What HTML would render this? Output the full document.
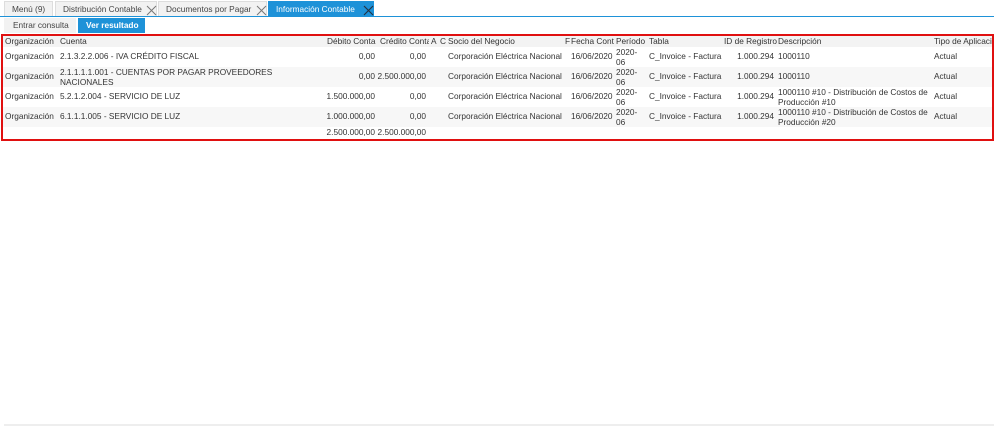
<!DOCTYPE html>
<html><head><meta charset="utf-8"><style>
*{margin:0;padding:0;box-sizing:border-box}
body{width:994px;height:426px;background:#fff;font-family:"Liberation Sans",sans-serif;font-size:8.3px;color:#333;position:relative;overflow:hidden}
.a{position:absolute;white-space:nowrap;line-height:9.5px}
.tab{position:absolute;top:1px;height:15px;background:#f2f2f2;border:1px solid #ddd;border-bottom:none;color:#444;padding:2px 0 0 7px;font-size:8.3px;line-height:10px}
.x{position:absolute;top:3px}
.r{text-align:right}
</style></head><body>
<div class="tab" style="left:4px;width:49px">Menú (9)</div>
<div class="tab" style="left:55px;width:102px">Distribución Contable<svg class="x" style="left:90px" width="11" height="11"><path d="M1 1L10 10M10 1L1 10" stroke="#777" stroke-width="1"/></svg></div>
<div class="tab" style="left:158px;width:109px">Documentos por Pagar<svg class="x" style="left:97px" width="11" height="11"><path d="M1 1L10 10M10 1L1 10" stroke="#777" stroke-width="1"/></svg></div>
<div class="tab" style="left:268px;width:106px;background:#1e92d8;color:#fff;border-color:#1e92d8">Información Contable<svg class="x" style="left:94px" width="11" height="11"><path d="M1 1L10 10M10 1L1 10" stroke="#234" stroke-width="1.2"/></svg></div>
<div style="position:absolute;left:0;top:16px;width:994px;height:1px;background:#1e92d8"></div>
<div class="a" style="left:4px;top:18px;height:15px;width:72px;background:#f2f2f2;padding:3px 0 0 9px;color:#444">Entrar consulta</div>
<div class="a" style="left:78px;top:18px;height:15px;width:67px;background:#1e92d8;color:#fff;font-weight:bold;padding:3px 0 0 8px">Ver resultado</div>
<div style="position:absolute;left:1px;top:34px;width:993px;height:107px;border:2px solid #e01010"></div>
<div style="position:absolute;left:3px;top:36px;width:989px;height:11px;background:#f3f3f3"></div>
<div style="position:absolute;left:3px;top:67px;width:989px;height:20px;background:#f7f7f7"></div>
<div style="position:absolute;left:3px;top:107px;width:989px;height:20px;background:#f7f7f7"></div>
<div class="a" style="left:5px;top:37px">Organización</div>
<div class="a" style="left:60px;top:37px">Cuenta</div>
<div class="a" style="left:327px;top:37px;width:50px;overflow:hidden">Débito Conta</div>
<div class="a" style="left:380px;top:37px;width:49px;overflow:hidden">Crédito Conta</div>
<div class="a" style="left:431px;top:37px">A</div><div class="a" style="left:440px;top:37px">C</div>
<div class="a" style="left:448px;top:37px">Socio del Negocio</div>
<div class="a" style="left:565px;top:37px">F</div>
<div class="a" style="left:571px;top:37px;width:44px;overflow:hidden">Fecha Cont</div>
<div class="a" style="left:616px;top:37px">Período</div>
<div class="a" style="left:649px;top:37px">Tabla</div>
<div class="a" style="left:724px;top:37px;width:53px;overflow:hidden">ID de Registro</div>
<div class="a" style="left:778px;top:37px">Descripción</div>
<div class="a" style="left:934px;top:37px;width:58px;overflow:hidden">Tipo de Aplicación</div>

<div class="a" style="left:5px;top:52px">Organización</div><div class="a" style="left:60px;top:52px">2.1.3.2.2.006 - IVA CRÉDITO FISCAL</div>
<div class="a r" style="left:300px;width:75px;top:52px">0,00</div><div class="a r" style="left:360px;width:66px;top:52px">0,00</div>
<div class="a" style="left:448px;top:52px">Corporación Eléctrica Nacional</div><div class="a" style="left:571px;top:52px">16/06/2020</div>
<div class="a" style="left:616px;top:48px">2020-<br>06</div><div class="a" style="left:649px;top:52px">C_Invoice - Factura</div>
<div class="a r" style="left:720px;width:54px;top:52px">1.000.294</div><div class="a" style="left:778px;top:52px">1000110</div><div class="a" style="left:934px;top:52px">Actual</div>

<div class="a" style="left:5px;top:72px">Organización</div><div class="a" style="left:60px;top:68px">2.1.1.1.1.001 - CUENTAS POR PAGAR PROVEEDORES<br>NACIONALES</div>
<div class="a r" style="left:300px;width:75px;top:72px">0,00</div><div class="a r" style="left:360px;width:66px;top:72px">2.500.000,00</div>
<div class="a" style="left:448px;top:72px">Corporación Eléctrica Nacional</div><div class="a" style="left:571px;top:72px">16/06/2020</div>
<div class="a" style="left:616px;top:68px">2020-<br>06</div><div class="a" style="left:649px;top:72px">C_Invoice - Factura</div>
<div class="a r" style="left:720px;width:54px;top:72px">1.000.294</div><div class="a" style="left:778px;top:72px">1000110</div><div class="a" style="left:934px;top:72px">Actual</div>

<div class="a" style="left:5px;top:92px">Organización</div><div class="a" style="left:60px;top:92px">5.2.1.2.004 - SERVICIO DE LUZ</div>
<div class="a r" style="left:300px;width:75px;top:92px">1.500.000,00</div><div class="a r" style="left:360px;width:66px;top:92px">0,00</div>
<div class="a" style="left:448px;top:92px">Corporación Eléctrica Nacional</div><div class="a" style="left:571px;top:92px">16/06/2020</div>
<div class="a" style="left:616px;top:88px">2020-<br>06</div><div class="a" style="left:649px;top:92px">C_Invoice - Factura</div>
<div class="a r" style="left:720px;width:54px;top:92px">1.000.294</div><div class="a" style="left:778px;top:88px">1000110 #10 - Distribución de Costos de<br>Producción #10</div><div class="a" style="left:934px;top:92px">Actual</div>

<div class="a" style="left:5px;top:112px">Organización</div><div class="a" style="left:60px;top:112px">6.1.1.1.005 - SERVICIO DE LUZ</div>
<div class="a r" style="left:300px;width:75px;top:112px">1.000.000,00</div><div class="a r" style="left:360px;width:66px;top:112px">0,00</div>
<div class="a" style="left:448px;top:112px">Corporación Eléctrica Nacional</div><div class="a" style="left:571px;top:112px">16/06/2020</div>
<div class="a" style="left:616px;top:108px">2020-<br>06</div><div class="a" style="left:649px;top:112px">C_Invoice - Factura</div>
<div class="a r" style="left:720px;width:54px;top:112px">1.000.294</div><div class="a" style="left:778px;top:108px">1000110 #10 - Distribución de Costos de<br>Producción #20</div><div class="a" style="left:934px;top:112px">Actual</div>

<div class="a r" style="left:300px;width:75px;top:128px">2.500.000,00</div><div class="a r" style="left:360px;width:66px;top:128px">2.500.000,00</div>
<div style="position:absolute;left:4px;top:424px;width:990px;height:2px;background:#eee"></div>
</body></html>
